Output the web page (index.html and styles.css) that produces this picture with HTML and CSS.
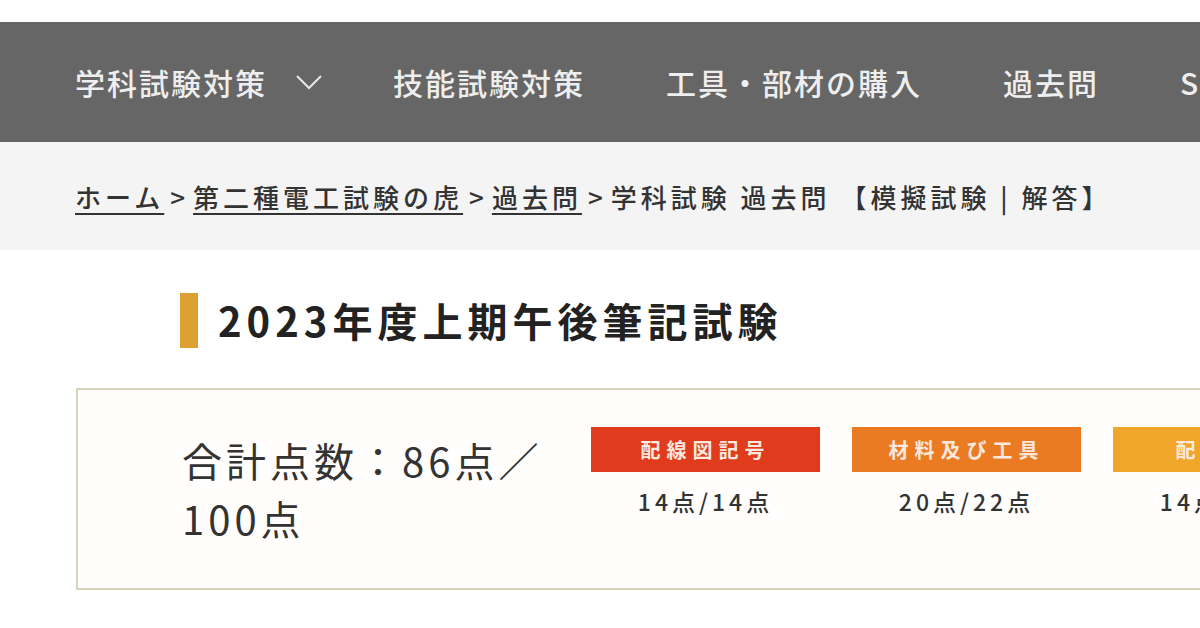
FILE: index.html
```html
<!DOCTYPE html>
<html lang="ja">
<head>
    <meta charset="UTF-8">
    <meta name="viewport" content="width=device-width, initial-scale=1.0">
    <title>学科試験 過去問 【模擬試験 | 解答】</title>
    <link rel="stylesheet" href="styles.css">
</head>
<body>
    <div class="page">
        <!-- グローバルナビ -->
        <nav class="global-nav">
            <a href="#" class="nav-item">学科試験対策
                <svg class="chevron" width="28" height="16" viewBox="0 0 28 16"><path d="M2 2 L14 14 L26 2" fill="none" stroke="#e8e8e8" stroke-width="2"/></svg>
            </a>
            <a href="#" class="nav-item">技能試験対策</a>
            <a href="#" class="nav-item">工具・部材の購入</a>
            <a href="#" class="nav-item">過去問</a>
            <a href="#" class="nav-item">SNS</a>
        </nav>

        <!-- パンくず -->
        <div class="breadcrumb">
            <a href="#">ホーム</a><span class="sep">&gt;</span><a href="#">第二種電工試験の虎</a><span class="sep">&gt;</span><a href="#">過去問</a><span class="sep">&gt;</span><span class="current">学科試験 過去問 【模擬試験 | 解答】</span>
        </div>

        <main class="content">
            <h2 class="section-title">2023年度上期午後筆記試験</h2>

            <div class="score-box">
                <div class="score-total">合計点数：86点／100点</div>
                <div class="score-items">
                    <div class="score-item">
                        <div class="label red">配線図記号</div>
                        <div class="points">14点/14点</div>
                    </div>
                    <div class="score-item">
                        <div class="label orange">材料及び工具</div>
                        <div class="points">20点/22点</div>
                    </div>
                    <div class="score-item">
                        <div class="label yellow">配線設計</div>
                        <div class="points">14点/16点</div>
                    </div>
                </div>
            </div>
        </main>
    </div>
</body>
</html>
```

FILE: styles.css
```css
* { box-sizing: border-box; margin: 0; padding: 0; }
html, body { width: 1200px; height: 628px; overflow: hidden; }
body { font-family: "Noto Sans CJK JP", "Noto Sans", sans-serif; background: #fff; color: #333; }
a { color: inherit; text-decoration: none; }

.page { width: 1500px; padding-top: 22px; }

/* ナビ */
.global-nav { display: flex; align-items: center; gap: 81px; height: 120px; padding-left: 75px; background: #666; white-space: nowrap; }
.nav-item { display: flex; align-items: center; color: #eee; font-size: 30px; letter-spacing: 2px; font-weight: 500; }
.chevron { margin-left: 28px; margin-right: -11px; }

/* パンくず */
.breadcrumb { display: flex; align-items: center; height: 108px; padding-left: 75px; background: #f4f4f4; font-size: 26px; letter-spacing: 4px; font-weight: 500; color: #333; white-space: nowrap; }
.breadcrumb a { text-decoration: underline; text-underline-offset: 5px; text-decoration-thickness: 2px; }
.breadcrumb .sep { margin: 0 8px 0 6px; letter-spacing: 0; }

/* 見出し */
.content { padding-top: 43px; }
.section-title { display: flex; align-items: center; margin-left: 180px; font-size: 40px; font-weight: 700; letter-spacing: 5px; color: #222; line-height: 55px; }
.section-title::before { content: ""; width: 18px; height: 55px; background: #dda034; margin-right: 20px; }

/* 点数ボックス */
.score-box { display: flex; align-items: center; width: 1300px; height: 202px; margin: 40px 0 0 76px; padding-left: 104px; border: 2px solid #d9d3b9; background: #fffefc; }
.score-total { width: 390px; font-size: 40px; line-height: 58px; letter-spacing: 4px; color: #333; }
.score-items { display: flex; gap: 32px; align-self: flex-start; margin-top: 37px; margin-left: 19px; }
.score-item { width: 229px; text-align: center; }
.label { height: 45px; line-height: 45px; font-size: 20px; font-weight: 700; letter-spacing: 6px; color: #fbe8df; }
.red { background: #e03b1d; }
.orange { background: #ea7b23; }
.yellow { background: #f0a62b; }
.points { margin-top: 12px; font-size: 23px; font-weight: 500; letter-spacing: 4px; color: #333; }
```
